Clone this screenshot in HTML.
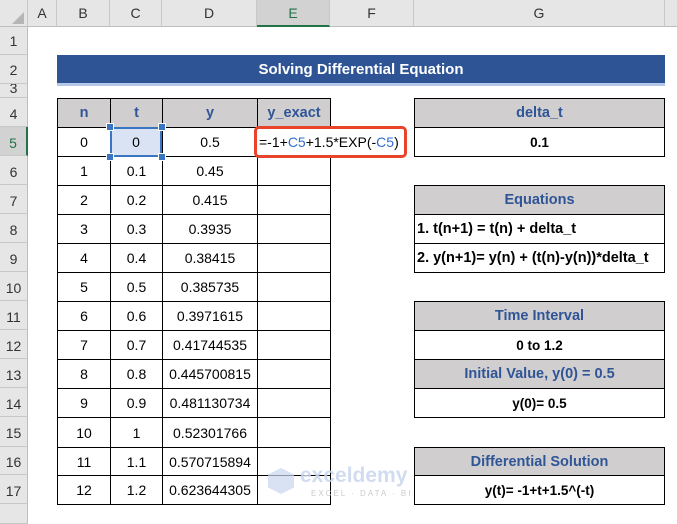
<!DOCTYPE html>
<html><head><meta charset="utf-8"><style>
*{margin:0;padding:0;box-sizing:border-box}
body{width:677px;height:515px;position:relative;overflow:hidden;background:#fff;font-family:"Liberation Sans",Calibri,sans-serif;}
.a{position:absolute}
.ch{position:absolute;top:0;height:27px;background:#e6e6e6;border-right:1px solid #c8c8c8;border-bottom:1px solid #bdbdbd;font-size:14px;color:#333;text-align:center;line-height:27px}
.rh{position:absolute;left:0;width:28px;background:#e6e6e6;border-bottom:1px solid #c8c8c8;border-right:1px solid #bdbdbd;font-size:14px;color:#333;text-align:center;overflow:hidden}
.c{position:absolute;border:1px solid #000;font-size:14px;color:#000;text-align:center;display:flex;align-items:center;justify-content:center;white-space:nowrap}
.h{background:#d0cece;color:#2f5597;font-weight:bold;font-size:14.5px}
.b{font-weight:bold;font-size:13.5px}
.l{justify-content:flex-start;padding-left:2px;font-size:14.5px}
</style></head><body>
<div class="ch" style="left:0;width:28px;background:#e6e6e6"></div>
<div class="a" style="left:12px;top:12px;width:0;height:0;border-left:12px solid transparent;border-bottom:12px solid #b5b5b5"></div>
<div class="ch" style="left:28px;width:29px">A</div>
<div class="ch" style="left:57px;width:53px">B</div>
<div class="ch" style="left:110px;width:52px">C</div>
<div class="ch" style="left:162px;width:95px">D</div>
<div class="ch" style="left:257px;width:73px;background:#d2d2d2;color:#217346;border-bottom:2px solid #217346">E</div>
<div class="ch" style="left:330px;width:84px">F</div>
<div class="ch" style="left:414px;width:251px">G</div>
<div class="ch" style="left:665px;width:12px;border-right:none"></div>
<div class="rh" style="top:27px;height:28px;line-height:28px">1</div>
<div class="rh" style="top:55px;height:29px;line-height:30px">2</div>
<div class="rh" style="top:84px;height:14px;line-height:9px">3</div>
<div class="rh" style="top:98px;height:29px;line-height:32px">4</div>
<div class="rh" style="top:127px;height:29px;line-height:32px;background:#d2d2d2;color:#217346;border-right:2px solid #217346">5</div>
<div class="rh" style="top:156px;height:29px;line-height:32px">6</div>
<div class="rh" style="top:185px;height:29px;line-height:32px">7</div>
<div class="rh" style="top:214px;height:29px;line-height:32px">8</div>
<div class="rh" style="top:243px;height:29px;line-height:32px">9</div>
<div class="rh" style="top:272px;height:29px;line-height:32px">10</div>
<div class="rh" style="top:301px;height:29px;line-height:32px">11</div>
<div class="rh" style="top:330px;height:29px;line-height:32px">12</div>
<div class="rh" style="top:359px;height:29px;line-height:32px">13</div>
<div class="rh" style="top:388px;height:29px;line-height:32px">14</div>
<div class="rh" style="top:417px;height:30px;line-height:33px">15</div>
<div class="rh" style="top:447px;height:28px;line-height:31px">16</div>
<div class="rh" style="top:475px;height:29px;line-height:32px">17</div>
<div class="rh" style="top:504px;height:20px"></div>
<div class="a" style="left:57px;top:55px;width:608px;height:28px;background:#2f5496;color:#fff;font-weight:bold;font-size:15px;text-align:center;line-height:30px">Solving Differential Equation</div>
<div class="a" style="left:57px;top:83px;width:608px;height:3px;background:#b4c7e7"></div>
<div id="t"></div>
<div class="c h" style="left:414px;top:98px;width:251px;height:30px">delta_t</div>
<div class="c b" style="left:414px;top:127px;width:251px;height:30px">0.1</div>
<div class="c h" style="left:414px;top:185px;width:251px;height:30px">Equations</div>
<div class="c b l" style="left:414px;top:214px;width:251px;height:30px">1. t(n+1) = t(n) + delta_t</div>
<div class="c b l" style="left:414px;top:243px;width:251px;height:30px">2. y(n+1)= y(n) + (t(n)-y(n))*delta_t</div>
<div class="c h" style="left:414px;top:301px;width:251px;height:30px">Time Interval</div>
<div class="c b" style="left:414px;top:330px;width:251px;height:30px">0 to 1.2</div>
<div class="c h" style="left:414px;top:359px;width:251px;height:30px">Initial Value, y(0) = 0.5</div>
<div class="c b" style="left:414px;top:388px;width:251px;height:30px">y(0)= 0.5</div>
<div class="c h" style="left:414px;top:447px;width:251px;height:29px">Differential Solution</div>
<div class="c b" style="left:414px;top:475px;width:251px;height:30px">y(t)= -1+t+1.5^(-t)</div>
<script>
var cols=[[57,53],[110,52],[162,95],[257,73]];
var tops=[98,127,156,185,214,243,272,301,330,359,388,417,447,475,504];
var data=[["n","t","y","y_exact"],["0","0","0.5",""],["1","0.1","0.45",""],["2","0.2","0.415",""],["3","0.3","0.3935",""],["4","0.4","0.38415",""],["5","0.5","0.385735",""],["6","0.6","0.3971615",""],["7","0.7","0.41744535",""],["8","0.8","0.445700815",""],["9","0.9","0.481130734",""],["10","1","0.52301766",""],["11","1.1","0.570715894",""],["12","1.2","0.623644305",""]];
var h="";
for(var r=0;r<14;r++)for(var c=0;c<4;c++){
h+='<div class="c'+(r==0?' h':'')+'" style="left:'+cols[c][0]+'px;top:'+tops[r]+'px;width:'+(cols[c][1]+1)+'px;height:'+(tops[r+1]-tops[r]+1)+'px">'+data[r][c]+'</div>';}
document.getElementById("t").innerHTML=h;
</script>
<div class="a" style="left:110px;top:127px;width:52px;height:30px;background:#dae3f3;border:2px solid #3a75c4;font-size:14px;text-align:center;line-height:26px">0</div>
<div class="a" style="left:106px;top:123px;width:8px;height:8px;background:#3a75c4;border:1px solid #fff"></div>
<div class="a" style="left:158px;top:123px;width:8px;height:8px;background:#3a75c4;border:1px solid #fff"></div>
<div class="a" style="left:106px;top:153px;width:8px;height:8px;background:#3a75c4;border:1px solid #fff"></div>
<div class="a" style="left:158px;top:153px;width:8px;height:8px;background:#3a75c4;border:1px solid #fff"></div>
<div class="a" style="left:254px;top:126px;width:153px;height:32px;background:#fff;border:3px solid #e8442a;border-radius:5px;font-size:14px;line-height:26px;padding-left:2px;white-space:nowrap">=-1+<span style="color:#2f6fd0">C5</span>+1.5*EXP(-<span style="color:#2f6fd0">C5</span>)</div>
<div class="a" style="left:268px;top:468px;width:26px;height:26px;background:#c9d6ee;clip-path:polygon(50% 0,100% 25%,100% 75%,50% 100%,0 75%,0 25%);opacity:.7"></div>
<div class="a" style="left:300px;top:464px;font-size:21px;font-weight:bold;color:#c9d6ee;opacity:.85">exceldemy</div>
<div class="a" style="left:311px;top:489px;font-size:8px;letter-spacing:2px;color:#ccc">EXCEL · DATA · BI</div>
</body></html>
